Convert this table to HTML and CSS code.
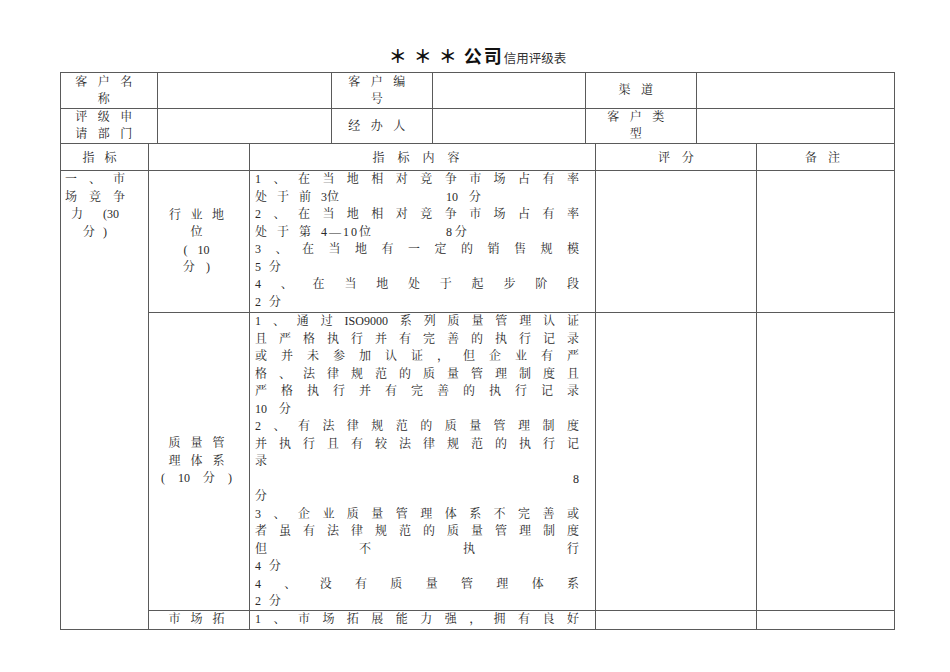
FILE: index.html
```html
<!DOCTYPE html>
<html lang="zh-CN">
<head>
<meta charset="utf-8">
<title>信用评级表</title>
<link rel="stylesheet" href="styles.css">
</head>
<body>
<div class="page">
  <div class="title"><span class="big"><span class="ast">＊＊＊</span>公司</span><span class="small">信用评级表</span></div>

  <div class="top">
    <div class="c lbl"><div>客户名</div><div>称</div></div>
    <div class="c"></div>
    <div class="c lbl"><div>客户编</div><div>号</div></div>
    <div class="c"></div>
    <div class="c lbl"><div>渠道</div></div>
    <div class="c"></div>
    <div class="c lbl"><div>评级申</div><div>请部门</div></div>
    <div class="c"></div>
    <div class="c lbl"><div>经办人</div></div>
    <div class="c"></div>
    <div class="c lbl"><div>客户类</div><div>型</div></div>
    <div class="c"></div>
  </div>

  <div class="main">
    <div class="c hd">指标</div>
    <div class="c"></div>
    <div class="c hd wide">指标内容</div>
    <div class="c hd comp12">评分</div>
    <div class="c hd comp5">备注</div>

    <div class="c cat">
      <div class="ln ws9">一 、 市</div>
      <div class="ln ws9">场 竞 争</div>
      <div class="ln ws17">力 (30</div>
      <div class="ln ws5">分 )</div>
    </div>

    <div class="c sub">
      <div class="ln ws65">行 业 地</div>
      <div class="ln">位</div>
      <div class="ln ws7">( 10</div>
      <div class="ln ws8">分 )</div>
    </div>
    <div class="c txt">
      <div class="ln j">1、在当地相对竞争市场占有率</div>
      <div class="ln split"><span class="a ws7">处 于 前 3位</span><span class="ws8">10 分</span></div>
      <div class="ln j">2、在当地相对竞争市场占有率</div>
      <div class="ln split"><span class="a ws7">处 于 第 <span class="rng">4—10</span>位</span><span>8 分</span></div>
      <div class="ln j">3、在当地有一定的销售规模</div>
      <div class="ln ws5">5 分</div>
      <div class="ln j">4、在当地处于起步阶段</div>
      <div class="ln ws5">2 分</div>
    </div>
    <div class="c"></div>
    <div class="c"></div>

    <div class="c sub">
      <div class="ln ws7">质 量 管</div>
      <div class="ln ws7">理 体 系</div>
      <div class="ln ws10">( 10 分 )</div>
    </div>
    <div class="c txt">
      <div class="ln j">1、通过ISO9000系列质量管理认证</div>
      <div class="ln j">且严格执行并有完善的执行记录</div>
      <div class="ln j">或并未参加认证，但企业有严</div>
      <div class="ln j">格、法律规范的质量管理制度且</div>
      <div class="ln j">严格执行并有完善的执行记录</div>
      <div class="ln ws9">10 分</div>
      <div class="ln j">2、有法律规范的质量管理制度</div>
      <div class="ln j">并执行且有较法律规范的执行记</div>
      <div class="ln">录</div>
      <div class="ln r">8</div>
      <div class="ln">分</div>
      <div class="ln j">3、企业质量管理体系不完善或</div>
      <div class="ln j">者虽有法律规范的质量管理制度</div>
      <div class="ln j">但不执行</div>
      <div class="ln ws5">4 分</div>
      <div class="ln j">4、没有质量管理体系</div>
      <div class="ln ws5">2 分</div>
    </div>
    <div class="c"></div>
    <div class="c"></div>

    <div class="c sub one">
      <div class="ln ws7">市 场 拓</div>
    </div>
    <div class="c txt">
      <div class="ln j">1、市场拓展能力强，拥有良好</div>
    </div>
    <div class="c"></div>
    <div class="c"></div>
  </div>
</div>
</body>
</html>
```

FILE: styles.css
```css
html, body {
  margin: 0;
  padding: 0;
  background: #ffffff;
}

body {
  font-family: "Liberation Serif", "Noto Serif CJK SC", "Noto Sans CJK SC", serif;
  font-size: 12px;
  color: #2a2a2a;
}

.page {
  padding-left: 60px;
  width: 835px;
}

.title {
  width: 835px;
  padding-top: 44px;
  height: 22px;
  line-height: 22px;
  margin-bottom: 6px;
  text-align: center;
  white-space: nowrap;
  font-family: "Noto Sans CJK SC", "Liberation Sans", sans-serif;
}

.big {
  font-size: 18px;
  font-weight: 700;
  letter-spacing: 2px;
  color: #111111;
}

.ast {
  letter-spacing: 7px;
  font-weight: 700;
}

.small {
  font-size: 12.5px;
  font-weight: 400;
  color: #333333;
}

.top {
  display: grid;
  grid-template-columns: 96px 173px 100px 152px 110px 197px;
  grid-template-rows: 35px 34px;
  gap: 1px;
  padding: 1px 1px 0 1px;
  background: #5a5a5a;
  width: 833px;
}

.main {
  display: grid;
  grid-template-columns: 87px 100px 345px 160px 137px;
  grid-template-rows: 26px 141px 297px 18px;
  gap: 1px;
  padding: 1px;
  background: #5a5a5a;
  width: 833px;
}

.c {
  background: #ffffff;
  overflow: hidden;
  min-width: 0;
}

.lbl {
  display: flex;
  flex-direction: column;
  justify-content: center;
  text-align: center;
  line-height: 17px;
  letter-spacing: 10.5px;
}

.hd {
  display: flex;
  align-items: center;
  justify-content: center;
  letter-spacing: 10px;
}

.hd.wide {
  letter-spacing: 13px;
}

.comp12 {
  letter-spacing: 12px;
  padding-left: 12px;
}

.comp5 {
  letter-spacing: 11px;
  padding-left: 5px;
}

.ln {
  height: 17.5px;
  line-height: 17.5px;
  white-space: pre;
}

.cat {
  grid-row: span 3;
  text-align: center;
  padding-right: 19px;
}

.sub {
  display: flex;
  flex-direction: column;
  justify-content: center;
  text-align: center;
  padding-right: 5px;
}

.sub.one {
  justify-content: flex-start;
}

.txt {
  padding: 0 16px 0 5px;
}

.j {
  white-space: nowrap;
  text-align: justify;
  text-align-last: justify;
}

.r {
  text-align: right;
}

.split {
  display: flex;
}

.split .a {
  width: 191px;
  flex: none;
}

.rng {
  letter-spacing: 2px;
  word-spacing: 0;
}

.ws5 { word-spacing: 5px; }
.ws65 { word-spacing: 6.5px; }
.ws7 { word-spacing: 7px; }
.ws8 { word-spacing: 8px; }
.ws9 { word-spacing: 9px; }
.ws10 { word-spacing: 10px; }
.ws17 { word-spacing: 17px; }
```
